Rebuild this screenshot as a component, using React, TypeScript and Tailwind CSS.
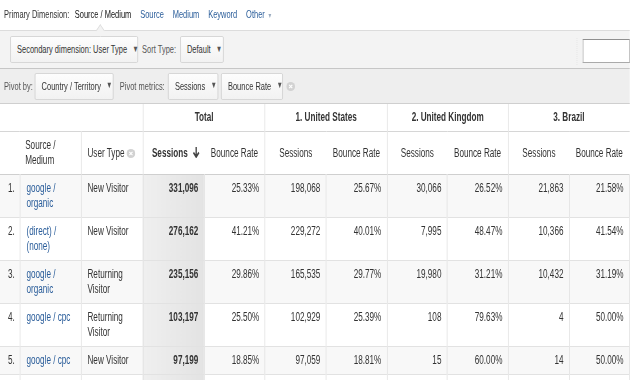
import React from 'react';

// The reference is a horizontally squeezed capture, so the page is laid out
// at full width and scaled on the x axis only.
type Row = {
  n: number;
  source: string[];
  userType: string[];
  cells: string[];
};

const ROWS: Row[] = [
  { n: 1, source: ['google /', 'organic'], userType: ['New Visitor'], cells: ['331,096', '25.33%', '198,068', '25.67%', '30,066', '26.52%', '21,863', '21.58%'] },
  { n: 2, source: ['(direct) /', '(none)'], userType: ['New Visitor'], cells: ['276,162', '41.21%', '229,272', '40.01%', '7,995', '48.47%', '10,366', '41.54%'] },
  { n: 3, source: ['google /', 'organic'], userType: ['Returning', 'Visitor'], cells: ['235,156', '29.86%', '165,535', '29.77%', '19,980', '31.21%', '10,432', '31.19%'] },
  { n: 4, source: ['google / cpc'], userType: ['Returning', 'Visitor'], cells: ['103,197', '25.50%', '102,929', '25.39%', '108', '79.63%', '4', '50.00%'] },
  { n: 5, source: ['google / cpc'], userType: ['New Visitor'], cells: ['97,199', '18.85%', '97,059', '18.81%', '15', '60.00%', '14', '50.00%'] },
  { n: 6, source: ['bing / organic'], userType: ['New Visitor'], cells: ['41,872', '22.10%', '38,405', '21.96%', '1,204', '30.15%', '96', '41.67%'] },
];

const COLS = [29.4, 89.7, 91.2, 89.7, 89.7, 89.7, 89.7, 88.3, 89.7, 89.7, 88.3];

const font = { fontFamily: '"Liberation Sans", Arial, sans-serif' };

const Caret = () => <span className="ml-[8px] text-[9px] text-[#555]">▼</span>;

const ClearIcon = () => (
  <svg width="13" height="9" viewBox="0 0 10 10" preserveAspectRatio="none" className="inline-block align-[-1px]">
    <circle cx="5" cy="5" r="5" fill="#d2d2d2" />
    <path d="M3.2 3.2 L6.8 6.8 M6.8 3.2 L3.2 6.8" stroke="#fff" strokeWidth="1.3" />
  </svg>
);

const Btn = ({ children, className = '' }: { children: React.ReactNode; className?: string }) => (
  <div className={`flex items-center justify-between h-[27px] px-[9px] border-[1.5px] border-[#d2d2d2] rounded-[2px] bg-gradient-to-b from-[#fdfdfd] to-[#f2f2f2] text-[#333] whitespace-nowrap ${className}`}>
    {children}
  </div>
);

const vline = 'border-r-[1.5px] border-[#dedede]';

export default function App() {
  return (
    <div className="w-[630px] h-[380px] overflow-hidden bg-white">
      <div className="w-[926px] h-[380px] origin-top-left scale-x-[0.68] text-[11px] text-[#333]" style={font}>
        {/* primary dimension */}
        <div className="h-[30px] flex items-center pl-[6px] pb-[1px]">
          <span>Primary Dimension:</span>
          <span className="ml-[8px] text-[#111]">Source / Medium</span>
          <span className="ml-[13px] text-[#2a5d9a]">Source</span>
          <span className="ml-[13px] text-[#2a5d9a]">Medium</span>
          <span className="ml-[13px] text-[#2a5d9a]">Keyword</span>
          <span className="ml-[13px] text-[#2a5d9a]">
            Other<span className="ml-[4px] text-[7px] text-[#9aabbf]">▼</span>
          </span>
        </div>

        {/* secondary dimension */}
        <div className="relative h-[39px] bg-[#f3f3f3] border-t border-[#dcdcdc] border-b border-b-[#c6c6c6] flex items-center pl-[15px]">
          <div className="absolute -top-[5px] left-[143px] w-[9px] h-[9px] rotate-45 bg-[#f3f3f3] border-l border-t border-[#dcdcdc]" />
          <Btn className="w-[188px]">Secondary dimension: User Type<Caret /></Btn>
          <span className="ml-[6px] text-[#555]">Sort Type:</span>
          <Btn className="ml-[6px] w-[64px]">Default<Caret /></Btn>
          <div className="ml-auto h-[30px] border-l-[1.5px] border-dotted border-[#e4e4e4]" />
          <div className="ml-[8px] h-[24px] w-[69px] mt-[2px] border-[1.5px] border-[#aaaaaa] border-t-[#8f8f8f] bg-white" />
        </div>

        {/* pivot */}
        <div className="h-[35px] bg-[#eeeeee] border-b border-[#cfcfcf] flex items-center pl-[6px]">
          <span className="text-[#555]">Pivot by:</span>
          <Btn className="ml-[3px] w-[116px]">Country / Territory<Caret /></Btn>
          <span className="ml-[9px] text-[#555]">Pivot metrics:</span>
          <Btn className="ml-[5px] w-[74px]">Sessions<Caret /></Btn>
          <Btn className="ml-[4px] w-[91px]">Bounce Rate<Caret /></Btn>
          <span className="ml-[5px] flex"><ClearIcon /></span>
        </div>

        {/* table */}
        <table className="table-fixed border-collapse w-[926px] text-[12px]">
          <colgroup>
            {COLS.map((w, i) => (
              <col key={i} style={{ width: w }} />
            ))}
          </colgroup>
          <thead>
            <tr className="h-[27px] border-b border-[#d6d6d6]">
              <th colSpan={3} className={vline} />
              <th colSpan={2} className={`${vline} font-bold text-center`}>Total</th>
              <th colSpan={2} className={`${vline} font-bold text-center`}>1. United States</th>
              <th colSpan={2} className={`${vline} font-bold text-center`}>2. United Kingdom</th>
              <th colSpan={2} className="font-bold text-center">3. Brazil</th>
            </tr>
            <tr className="h-[43px] border-b border-[#cfcfcf]">
              <th colSpan={2} className={`${vline} text-left font-normal pl-[37px] leading-[15px]`}>
                Source /<br />Medium
              </th>
              <th className={`${vline} text-left font-normal pl-[9px] whitespace-nowrap`}>
                User Type <ClearIcon />
              </th>
              <th className="text-right font-bold pr-[5px] whitespace-nowrap">
                Sessions
                <svg width="13" height="11" viewBox="0 0 13 11" className="inline-block ml-[6px] align-[-1px]">
                  <path d="M6.5 0 V9 M2.5 5.5 L6.5 10 L10.5 5.5" stroke="#444" strokeWidth="2" fill="none" />
                </svg>
              </th>
              <th className={`${vline} text-center font-normal`}>Bounce Rate</th>
              <th className="text-center font-normal">Sessions</th>
              <th className={`${vline} text-center font-normal`}>Bounce Rate</th>
              <th className="text-center font-normal">Sessions</th>
              <th className={`${vline} text-center font-normal`}>Bounce Rate</th>
              <th className="text-center font-normal">Sessions</th>
              <th className="text-center font-normal">Bounce Rate</th>
            </tr>
          </thead>
          <tbody>
            {ROWS.map((r) => (
              <tr
                key={r.n}
                className={`border-b border-[#e2e2e2] align-top leading-[15px] ${r.n % 2 === 1 ? 'bg-[#f8f8f8]' : 'bg-white'}`}
              >
                <td className={`${vline} text-right pr-[7px] pt-[6px] pb-[6px]`}>{r.n}.</td>
                <td className={`${vline} pl-[9px] pt-[6px] pb-[6px] text-[#2a5d9a] whitespace-nowrap`}>
                  {r.source.map((s, i) => (
                    <div key={i}>{s}</div>
                  ))}
                </td>
                <td className={`${vline} pl-[9px] pt-[6px] pb-[6px] whitespace-nowrap`}>
                  {r.userType.map((s, i) => (
                    <div key={i}>{s}</div>
                  ))}
                </td>
                {r.cells.map((c, i) => (
                  <td
                    key={i}
                    className={`${vline} text-right pr-[8px] pt-[6px] pb-[6px] ${
                      i === 0 ? 'font-bold bg-gradient-to-r from-[#efefef] to-[#e3e3e3]' : ''
                    }`}
                  >
                    {c}
                  </td>
                ))}
              </tr>
            ))}
          </tbody>
        </table>
      </div>
    </div>
  );
}
